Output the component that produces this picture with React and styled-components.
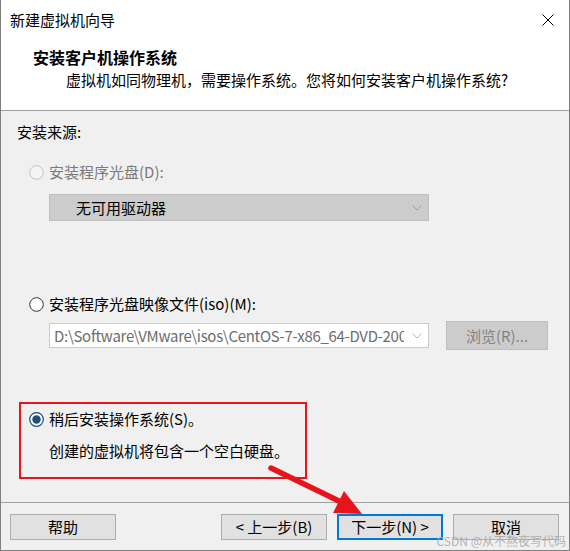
import React from "react";
import styled, { createGlobalStyle } from "styled-components";

const GlobalStyle = createGlobalStyle`
  html, body { margin: 0; padding: 0; background: #ffffff; }
  body {
    font-family: "Noto Sans CJK SC", "Microsoft YaHei", sans-serif;
    -webkit-font-smoothing: antialiased;
  }
`;

const Window = styled.div`
  position: relative;
  width: 570px;
  height: 551px;
  box-sizing: border-box;
  border: 1px solid #7f7f7f;
  border-top: none;
  display: flex;
  flex-direction: column;
  background: #ffffff;
  color: #000;
  font-size: 15px;
  overflow: hidden;
`;

const TitleBar = styled.div`
  height: 39px;
  display: flex;
  align-items: center;
  justify-content: space-between;
  padding: 0 15px 0 9px;
  line-height: 20px;
`;

const CloseIcon = styled.svg`
  width: 12px;
  height: 12px;
  display: block;
`;

const Header = styled.div`
  display: flex;
  flex-direction: column;
  gap: 3px;
  padding: 8px 0 20px 32px;
  border-bottom: 1px solid #a0a0a0;
`;

const HeaderTitle = styled.div`
  font-size: 16px;
  font-weight: 700;
  line-height: 20px;
`;

const HeaderSub = styled.div`
  line-height: 20px;
  margin-left: 33px;
`;

const Body = styled.div`
  flex: 1;
  background: #f0f0f0;
  display: flex;
  flex-direction: column;
  align-items: flex-start;
  padding: 11px 0 0 16px;
`;

const Label = styled.div`
  line-height: 20px;
`;

const RadioRow = styled.label`
  display: flex;
  align-items: center;
  gap: 5px;
  height: 20px;
  line-height: 20px;
  margin-top: ${(p) => p.$mt || 0}px;
  margin-left: ${(p) => (p.$ml === undefined ? 12 : p.$ml)}px;
  color: ${(p) => (p.$disabled ? "#7a7a7a" : "#000")};
`;

const RadioSvg = styled.svg`
  width: 15px;
  height: 15px;
  display: block;
  flex: none;
`;

const Select = styled.div`
  box-sizing: border-box;
  width: 380px;
  height: 27px;
  margin: 12px 0 0 32px;
  background: #cccccc;
  border: 1px solid #bfbfbf;
  display: flex;
  align-items: center;
  justify-content: space-between;
  padding: 0 6px 0 26px;
  line-height: 20px;
`;

const ComboRow = styled.div`
  display: flex;
  align-items: center;
  height: 29px;
  margin: 7px 0 0 32px;
`;

const Combo = styled.div`
  box-sizing: border-box;
  width: 380px;
  height: 25px;
  background: #ffffff;
  border: 1px solid #cccccc;
  display: flex;
  align-items: center;
  padding: 0 6px 0 4px;
  gap: 8px;
  color: #6d6d6d;
  line-height: 20px;
`;

const ComboText = styled.div`
  flex: 1;
  overflow: hidden;
  white-space: nowrap;
  letter-spacing: -0.3px;
`;

const Chevron = styled.svg`
  width: 10px;
  height: 6px;
  display: block;
  flex: none;
`;

const Button = styled.button`
  box-sizing: border-box;
  width: ${(p) => p.$w || 106}px;
  height: ${(p) => p.$h || 26}px;
  margin: 0;
  padding: 0;
  font-family: inherit;
  font-size: 15px;
  line-height: 20px;
  color: ${(p) => (p.$disabled ? "#838383" : "#000")};
  background: ${(p) => (p.$disabled ? "#cccccc" : "#e1e1e1")};
  border: ${(p) =>
    p.$primary ? "2px solid #0078d7" : p.$disabled ? "1px solid #bfbfbf" : "1px solid #adadad"};
  margin-left: ${(p) => p.$ml || 0}px;
  margin-right: ${(p) => (p.$push ? "auto" : "0")};
`;

const Highlight = styled.div`
  box-sizing: border-box;
  width: 288px;
  margin: 52px 0 0 2px;
  border: 2px solid #e8141c;
  padding: 5px 0 16px 8px;
  display: flex;
  flex-direction: column;
`;

const Desc = styled.div`
  line-height: 20px;
  margin: 12px 0 0 20px;
`;

const Footer = styled.div`
  background: #f0f0f0;
  border-top: 1px solid #a0a0a0;
  height: 48px;
  box-sizing: border-box;
  padding: 11px 10px 0 9px;
  display: flex;
  align-items: flex-start;
  gap: 10px;
`;

const Watermark = styled.div`
  position: absolute;
  right: 3px;
  bottom: 2px;
  font-size: 12px;
  line-height: 14px;
  color: rgba(165, 165, 165, 0.85);
  pointer-events: none;
`;

const Overlay = styled.svg`
  position: absolute;
  left: 0;
  top: 0;
  width: 570px;
  height: 551px;
  pointer-events: none;
`;

function Radio({ state }) {
  if (state === "disabled") {
    return (
      <RadioSvg viewBox="0 0 15 15">
        <circle cx="7.5" cy="7.5" r="6.8" fill="#f4f4f4" stroke="#c2c2c2" strokeWidth="1" />
      </RadioSvg>
    );
  }
  if (state === "checked") {
    return (
      <RadioSvg viewBox="0 0 15 15">
        <circle cx="7.5" cy="7.5" r="6.8" fill="#ffffff" stroke="#1c4a78" strokeWidth="1.2" />
        <circle cx="7.5" cy="7.5" r="4.2" fill="#1f4f7e" />
      </RadioSvg>
    );
  }
  return (
    <RadioSvg viewBox="0 0 15 15">
      <circle cx="7.5" cy="7.5" r="6.8" fill="#ffffff" stroke="#333333" strokeWidth="1" />
    </RadioSvg>
  );
}

function Down({ color }) {
  return (
    <Chevron viewBox="0 0 10 6">
      <polyline points="0.5,0.5 5,5 9.5,0.5" fill="none" stroke={color} strokeWidth="1" />
    </Chevron>
  );
}

export default function App() {
  return (
    <>
      <GlobalStyle />
      <Window>
        <TitleBar>
          <span>新建虚拟机向导</span>
          <CloseIcon viewBox="0 0 12 12">
            <line x1="0.5" y1="0.5" x2="11.5" y2="11.5" stroke="#000" strokeWidth="1" />
            <line x1="11.5" y1="0.5" x2="0.5" y2="11.5" stroke="#000" strokeWidth="1" />
          </CloseIcon>
        </TitleBar>
        <Header>
          <HeaderTitle>安装客户机操作系统</HeaderTitle>
          <HeaderSub>虚拟机如同物理机，需要操作系统。您将如何安装客户机操作系统?</HeaderSub>
        </Header>
        <Body>
          <Label>安装来源:</Label>
          <RadioRow $mt={20} $disabled>
            <Radio state="disabled" />
            <span>安装程序光盘(D):</span>
          </RadioRow>
          <Select>
            <span>无可用驱动器</span>
            <Down color="#9c9c9c" />
          </Select>
          <RadioRow $mt={73}>
            <Radio state="off" />
            <span>安装程序光盘映像文件(iso)(M):</span>
          </RadioRow>
          <ComboRow>
            <Combo>
              <ComboText>D:\Software\VMware\isos\CentOS-7-x86_64-DVD-2009.iso</ComboText>
              <Down color="#b4b4b4" />
            </Combo>
            <Button $w={102} $h={29} $ml={17} $disabled>
              浏览(R)...
            </Button>
          </ComboRow>
          <Highlight>
            <RadioRow $ml={0}>
              <Radio state="checked" />
              <span>稍后安装操作系统(S)。</span>
            </RadioRow>
            <Desc>创建的虚拟机将包含一个空白硬盘。</Desc>
          </Highlight>
        </Body>
        <Footer>
          <Button $push>帮助</Button>
          <Button>&lt; 上一步(B)</Button>
          <Button $primary>下一步(N) &gt;</Button>
          <Button>取消</Button>
        </Footer>
        <Watermark>CSDN @从不熬夜写代码</Watermark>
        <Overlay viewBox="0 0 570 551">
          <line x1="270" y1="468" x2="340" y2="502" stroke="#e8141c" strokeWidth="5.5" strokeLinecap="round" />
          <polygon points="361,514 332,513 343,491" fill="#e8141c" />
        </Overlay>
      </Window>
    </>
  );
}
